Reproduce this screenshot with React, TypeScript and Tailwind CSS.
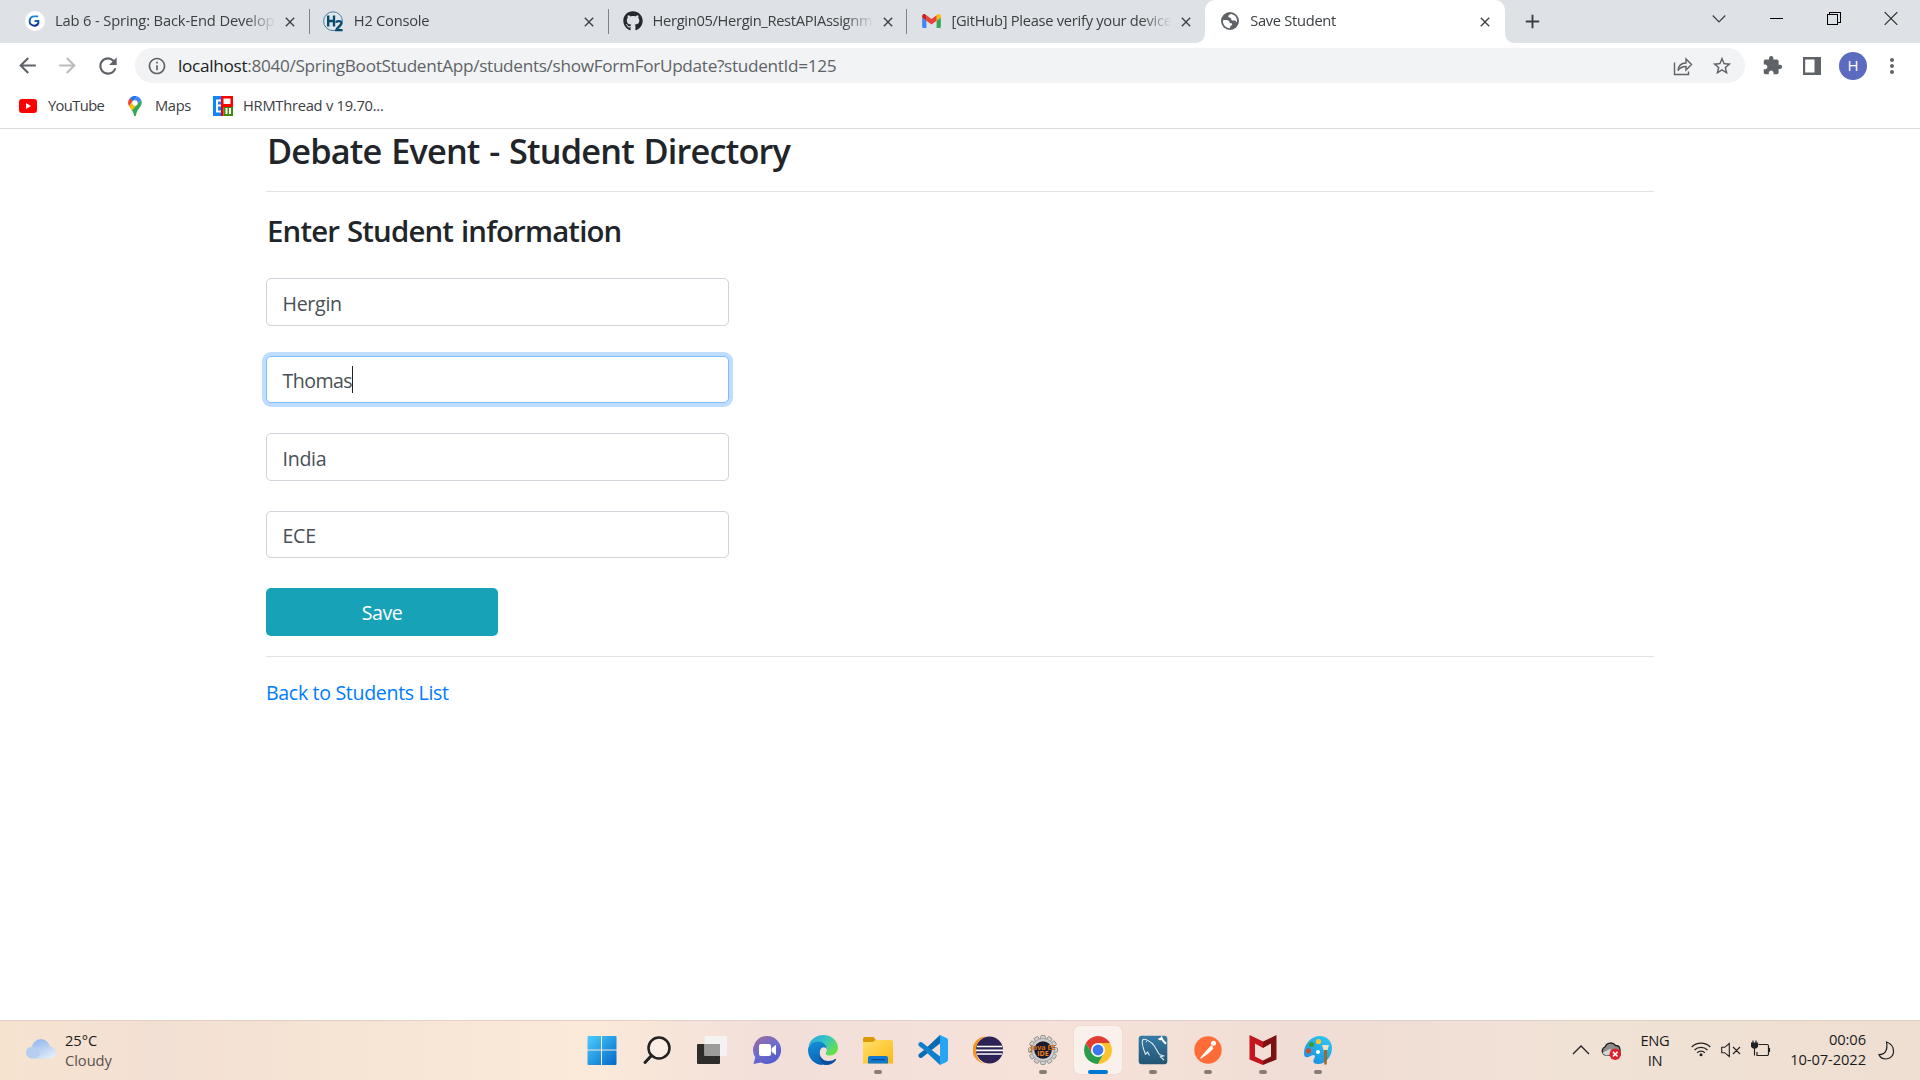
import React from "react";
import { FaGithub } from "react-icons/fa";
import {
  MdClose,
  MdAdd,
  MdArrowBack,
  MdArrowForward,
  MdRefresh,
  MdInfoOutline,
  MdStarBorder,
  MdExtension,
  MdMoreVert,
} from "react-icons/md";

type TabProps = {
  icon: React.ReactNode;
  title: string;
  titleClass: string;
  active?: boolean;
  separator?: boolean;
};

function Flare({ side }: { side: "left" | "right" }) {
  return (
    <svg
      viewBox="0 0 10 10"
      className={
        side === "left"
          ? "absolute bottom-0 -left-[10px] size-[10px]"
          : "absolute -right-[10px] bottom-0 size-[10px] -scale-x-100"
      }
    >
      <path d="M10 0v10H0C6 10 10 6 10 0Z" fill="#fff" />
    </svg>
  );
}

function Tab({ icon, title, titleClass, active, separator }: TabProps) {
  return (
    <div
      className={
        active
          ? "relative flex h-[43px] w-[299.5px] items-center rounded-t-[10px] bg-white"
          : "relative flex h-[43px] w-[298.8px] items-center"
      }
    >
      {active && <Flare side="left" />}
      {active && <Flare side="right" />}
      <span className={separator ? "h-[25px] w-px bg-[#808388]" : "w-px"} />
      <span className="ml-[14px] flex w-5 justify-center pb-px">{icon}</span>
      <span
        className={
          "ml-[10px] w-[221px] overflow-hidden pb-[3px] text-[14.7px] leading-5 whitespace-nowrap text-[#3c4043] [mask-image:linear-gradient(to_right,#000_190px,transparent_221px)] " +
          titleClass
        }
      >
        {title}
      </span>
      <MdClose className="ml-[6px] size-[16px] text-[#3c4043]" />
    </div>
  );
}

function GreatLearningIcon() {
  return (
    <svg viewBox="0 0 20 20" className="size-5">
      <circle cx="10" cy="10" r="10" fill="#fff" />
      <path d="M13.2 5.4H9.4a4.6 4.6 0 1 0 4 6.6v-2H9.6" fill="none" stroke="url(#gl)" strokeWidth="1.9" />
      <defs>
        <linearGradient id="gl" x1="0" y1="0" x2="0" y2="1">
          <stop stopColor="#1d84dc" />
          <stop offset="1" stopColor="#0a2f9b" />
        </linearGradient>
      </defs>
    </svg>
  );
}

function H2Icon() {
  return (
    <svg viewBox="0 0 21 21" className="size-[21px] shrink-0">
      <circle cx="10" cy="10.2" r="9.4" fill="#dfe6ec" stroke="#4d7d99" strokeWidth="1" />
      <path d="M5.2 4.6v10.8M11 4.6v10.8M5.2 10H11" stroke="#0b4a6f" strokeWidth="2.4" fill="none" />
      <path d="M13 11.6c.6-2 5.6-2.2 5.4.6-.2 2.200-4.400 4-5.200 7h6.400" stroke="#0b4a6f" strokeWidth="2.2" fill="none" />
    </svg>
  );
}

function GmailIcon() {
  return (
    <svg viewBox="52 42 88 66" className="h-[14px] w-[19px]">
      <path fill="#4285f4" d="M58 108h14V74L52 59v43c0 3.320 2.690 6 6 6" />
      <path fill="#34a853" d="M120 108h14c3.320 0 6-2.690 6-6V59l-20 15" />
      <path fill="#fbbc04" d="M120 48v26l20-15v-8c0-7.420-8.470-11.650-14.400-7.200" />
      <path fill="#ea4335" d="M72 74V48l24 18 24-18v26L96 92" />
      <path fill="#c5221f" d="M52 51v8l20 15V48l-5.600-4.200c-5.940-4.450-14.400-.220-14.400 7.200" />
    </svg>
  );
}

function GlobeIcon() {
  return (
    <svg viewBox="0 0 18 18" className="size-[18px] shrink-0">
      <circle cx="9" cy="9" r="9" fill="#5f6368" />
      <path d="M9.500 2c-1.500 1-2.500 1.500-2 3 .3 1 1.800.500 2.500 1.200.6.700-.2 1.600.8 2 1.500.5 2.600-.2 3.700.6.8.6.800 1.600 1.500 1.300.4-5-2.500-7.600-6.500-8.100Z" fill="#fff" />
      <path d="M2 8.200c1.500-.2 4.500-.4 5.700.5 1 .8.500 1.900 1.500 2.300 1 .4 2 .1 2 1.300 0 1.300-1.600 1.200-2 2.300-.2.700 0 1.200-.2 1.600C4.500 16 1.500 12.500 2 8.200Z" fill="#fff" />
    </svg>
  );
}

function BrowserChrome() {
  return (
    <header className="flex h-[129px] flex-col border-b border-[#dadce0] bg-white">
      <div className="flex h-[43px] items-center bg-[#dee1e6] pl-[10px]">
        <Tab icon={<GreatLearningIcon />} title="Lab 6 - Spring: Back-End Develop" titleClass="tracking-[-0.14px]" />
        <Tab icon={<H2Icon />} title="H2 Console" titleClass="tracking-[-0.25px]" separator />
        <Tab
          icon={<FaGithub className="size-5 text-[#24292f]" />}
          title="Hergin05/Hergin_RestAPIAssignm"
          titleClass="tracking-[-0.33px]"
          separator
        />
        <Tab icon={<GmailIcon />} title="[GitHub] Please verify your device" titleClass="tracking-[-0.28px]" separator />
        <Tab icon={<GlobeIcon />} title="Save Student" titleClass="tracking-[-0.3px]" active />
        <MdAdd className="ml-[16px] size-[23px] text-[#3c4043]" />
        <div className="ml-auto flex h-full items-start pt-[11px] text-black">
          <svg viewBox="0 0 14 14" className="mr-[44px] size-[14px]" fill="none" stroke="#3c4043">
            <path d="M.7 4.500 7 11l6.300-6.500" strokeWidth="1.2" />
          </svg>
          <svg viewBox="0 0 14 14" className="mr-[43px] size-[14px]" fill="none" stroke="#000" shapeRendering="crispEdges">
            <path d="M0 7.500h13" />
          </svg>
          <svg viewBox="0 0 14 14" className="mr-[43px] size-[14px]" fill="none" stroke="#000" shapeRendering="crispEdges">
            <path d="M.500 3.500h10v10H.5zM2.500 3.500v-2h10.500v10h-2.500" />
          </svg>
          <svg viewBox="0 0 14 14" className="mr-[22px] size-[14px]" fill="none" stroke="#222">
            <path d="M.7 1.200l12.600 12.600M13.300 1.200.7 13.800" strokeWidth="1.100" />
          </svg>
        </div>
      </div>

      <div className="flex h-[45px] items-center text-[#5f6368]">
        <MdArrowBack className="ml-[15px] size-[25px]" />
        <MdArrowForward className="ml-[15px] size-[25px] text-[#babcbe]" />
        <MdRefresh className="ml-[15px] size-[26px]" />
        <div className="ml-[14px] flex h-[35px] w-[1610px] items-center rounded-full bg-[#f1f3f4]">
          <MdInfoOutline className="ml-[12px] size-[20px]" />
          <span className="ml-[11px] text-[17.2px] leading-6 tracking-[-0.31px] whitespace-nowrap">
            <span className="text-[#202124]">localhost</span>
            :8040/SpringBootStudentApp/students/showFormForUpdate?studentId=125
          </span>
          <svg viewBox="0 0 20 20" className="mr-[18px] ml-auto size-5" fill="none" stroke="#5f6368" strokeWidth="1.400">
            <path d="M1.500 6.500v12h14v-3M5 14.500c.500-5 3-7.500 8-7.500V3l5.500 5.500L13 14v-3.500c-4 0-6 1-8 4Z" />
          </svg>
          <MdStarBorder className="mr-[12px] size-[22px]" />
        </div>
        <MdExtension className="ml-[17px] size-[21px]" />
        <svg viewBox="0 0 18 18" className="ml-[20px] size-[18px]">
          <path d="M0 0h18v18H0zM2.200 2.400v13.200h9.300V2.400z" fill="#5f6368" fillRule="evenodd" />
        </svg>
        <span className="ml-[18px] flex size-7 items-center justify-center rounded-full bg-[#5c6bc0] text-[15px] font-medium text-white">
          H
        </span>
        <MdMoreVert className="ml-[13px] size-6" />
      </div>

      <div className="flex h-10 items-center pb-[5px] text-[14.700px] text-[#3c4043]">
        <svg viewBox="0 0 18 14" className="ml-[19px] h-[14px] w-[18px]">
          <rect width="18" height="14" rx="3" fill="#f00" />
          <path d="M7 4v6l5-3z" fill="#fff" />
        </svg>
        <span className="ml-[11px] w-[57px] pb-px tracking-[-0.600px]">YouTube</span>
        <svg viewBox="0 0 14 20" className="ml-[23px] h-5 w-[14px]">
          <path d="M0 7a7 7 0 0 1 2-5l3 2.500-3.700 5.700A7 7 0 0 1 0 7Z" fill="#ea4335" />
          <path d="M2 2a7 7 0 0 1 7-1.700L5 5z" fill="#1a73e8" />
          <path d="M9 .3A7 7 0 0 1 13.200 4L9.200 8.500 5 5z" fill="#4285f4" />
          <path d="M1.200 10.300 5 5l4 4-5.200 5.500z" fill="#fbbc04" />
          <path d="M13.200 4c2.500 6-4.200 8.500-5 14.500-.3 2-2.100 2-2.400 0-.2-1.500-1-3-2-4z" fill="#34a853" />
          <circle cx="7" cy="7" r="2.700" fill="#fff" />
        </svg>
        <span className="ml-[13px] w-[36px] pb-px tracking-[-0.350px]">Maps</span>
        <svg viewBox="0 0 20 20" className="ml-[22px] size-5">
          <path d="M0 0h8v20H0z" fill="#0a84ff" />
          <path d="M3 3.500h5v2H5v3h3v2H5v4h3v2H3z" fill="#fff" />
          <path d="M8 0h12v11H8z" fill="#f00" />
          <path d="M10.500 2.500h7V8h-7z" fill="#fff" />
          <path d="M10.500 11H20v9h-9.500z" fill="#3a8a0c" />
          <path d="M12.500 12h2v6h-2zM16 12h2v6h-2z" fill="#fff" />
          <path d="M8 10h2.500v10H8z" fill="#e00" />
        </svg>
        <span className="ml-[10px] pb-px tracking-[-0.250px]">HRMThread v 19.70...</span>
      </div>
    </header>
  );
}

function Field({ value, focused }: { value: string; focused?: boolean }) {
  return (
    <div
      className={
        focused
          ? "mb-[30px] flex h-[47.500px] w-[463px] items-center rounded-[5px] border border-[#80bdff] bg-white px-[15.500px] shadow-[0_0_0_4px_#bfdeff]"
          : "mb-[30px] flex h-[47.500px] w-[463px] items-center rounded-[5px] border border-[#ced4da] bg-white px-[15.500px]"
      }
    >
      <span
        className={
          focused
            ? "pt-[3px] text-[19.600px] leading-7 tracking-[-0.550px] text-[#495057]"
            : "pt-[4px] text-[19.600px] leading-7 tracking-[-0.300px] text-[#495057]"
        }
      >
        {value}
      </span>
      {focused && <span className="h-[27px] w-px bg-[#222]" />}
    </div>
  );
}

function StudentForm() {
  return (
    <main className="h-[891px] bg-white px-[266px] text-[#212529]">
      <h1 className="h-[63px] border-b border-[#e3e3e3] pl-px text-[34.300px] leading-[44px] font-[560] tracking-[-0.820px] [word-spacing:1.5px]">
        Debate Event - Student Directory
      </h1>
      <h2 className="mt-[19px] mb-[26px] h-[41px] pl-px text-[29.400px] leading-[41px] font-[560] tracking-[-0.830px] [word-spacing:1px]">
        Enter Student information
      </h2>
      <Field value="Hergin" />
      <Field value="Thomas" focused />
      <Field value="India" />
      <Field value="ECE" />
      <button className="block h-[48px] w-[232px] rounded-[5px] bg-[#17a2b8] pt-[2px] text-[19.600px] tracking-[-0.500px] text-white">
        Save
      </button>
      <div className="mt-[20px] border-t border-[#e3e3e3] pt-[21px] text-[19.600px] leading-[30px] tracking-[-0.340px] text-[#007bff]">
        Back to Students List
      </div>
    </main>
  );
}

function Slot({ children, running, active }: { children: React.ReactNode; running?: boolean; active?: boolean }) {
  return (
    <div className="flex w-[55.100px] justify-center">
      <div
        className={
          active
            ? "flex h-12 w-12 flex-col items-center rounded-[5px] bg-[#faf1ec] pt-[9px] shadow-[0_0_1px_#c9b5aa]"
            : "flex h-12 w-12 flex-col items-center pt-[9px]"
        }
      >
        <svg viewBox="0 0 30 30" className="size-[30px]">
          {children}
        </svg>
        {running && <span className="mt-[5px] h-1 w-2 rounded-full bg-[#877c76]" />}
        {active && <span className="mt-[5px] h-1 w-5 rounded-full bg-[#0078d4]" />}
      </div>
    </div>
  );
}

const gearTeeth = Array.from({ length: 12 }, (_, i) => i * 30);

function Taskbar() {
  return (
    <footer className="flex h-[60px] border-t border-[#dfcfc6] bg-[linear-gradient(90deg,#f6e3cf_0%,#f3e0d4_8%,#f6e4d4_18%,#fbe9d9_31%,#f2dfda_40%,#f6e2d8_55%,#f0ddd5_68%,#f1e2d6_82%,#efdfd3_100%)] text-[#1b1b1b]">
      <div className="flex w-[574.600px] pt-[5px]">
        <svg viewBox="0 0 30 20" className="mt-[13px] ml-[26px] h-5 w-[30px]">
          <defs>
            <linearGradient id="cl" x1="0" y1="0" x2=".3" y2="1">
              <stop stopColor="#8fb4ec" />
              <stop offset="1" stopColor="#cfe0f7" />
            </linearGradient>
            <linearGradient id="cl2" x1="0" y1="0" x2="1" y2="1">
              <stop stopColor="#a3c2ee" />
              <stop offset="1" stopColor="#eef4fb" />
            </linearGradient>
          </defs>
          <circle cx="15" cy="9" r="9" fill="url(#cl)" />
          <path d="M6 7.500c3-.5 5 1 6.500 3.500l3 8.500H6a6 6 0 0 1 0-12Z" fill="#b4cdf0" />
          <path d="M8 19.500c4-.5 7-5 9.500-9 3-5.500 12.500-3 12.500 3.200 0 3.300-2.600 5.800-6 5.800z" fill="url(#cl2)" />
        </svg>
        <div className="mt-[4px] ml-[9px] text-[14.700px] leading-5 tracking-[-0.050px]">
          <div>25°C</div>
          <div className="text-[#5a534f]">Cloudy</div>
        </div>
      </div>

      <div className="flex pt-[5px]">
        <Slot>
          <defs>
            <linearGradient id="win" x1="0" y1="0" x2="30" y2="30" gradientUnits="userSpaceOnUse">
              <stop stopColor="#4fd0ff" />
              <stop offset="1" stopColor="#0067c8" />
            </linearGradient>
          </defs>
          <path d="M.500 2a1 1 0 0 1 1-1H14v13.500H.5zM15 1h13.500a1 1 0 0 1 1 1v12.500H15zM.5 15.500H14V30H1.500a1 1 0 0 1-1-1zM15 15.500h14.500V29a1 1 0 0 1-1 1H15z" fill="url(#win)" />
        </Slot>
        <Slot>
          <circle cx="17" cy="13" r="10.500" fill="#fff" fillOpacity=".3" stroke="#222" strokeWidth="2.500" />
          <path d="m9.500 20.500-6.500 7" stroke="#222" strokeWidth="3" strokeLinecap="round" />
        </Slot>
        <Slot>
          <rect y="9" width="23" height="20" rx="1" fill="#2e2d2c" />
          <rect x="7.500" y="1" width="22.500" height="20" rx="1" fill="#f4f4f4" fillOpacity=".9" />
          <path d="M7.500 9H23v12H7.500z" fill="#9e9c9b" />
        </Slot>
        <Slot>
          <defs>
            <linearGradient id="chat" x1=".2" y1="0" x2=".8" y2="1">
              <stop stopColor="#9a6a9f" />
              <stop offset=".5" stopColor="#6a6cd0" />
              <stop offset="1" stopColor="#5059c9" />
            </linearGradient>
          </defs>
          <path d="M15 1a14 14 0 1 1-6 26.600L1.500 29l1.700-6.700A14 14 0 0 1 15 1Z" fill="url(#chat)" />
          <rect x="7" y="9" width="12" height="12" rx="2" fill="#fff" />
          <path d="m20 13.500 3.500-3v9l-3.500-3z" fill="#fff" stroke="#fff" strokeLinejoin="round" />
        </Slot>
        <Slot>
          <defs>
            <linearGradient id="ea" x1="0" y1="0" x2="1" y2=".6">
              <stop stopColor="#2a9fe0" />
              <stop offset=".5" stopColor="#35c3c9" />
              <stop offset="1" stopColor="#66e04a" />
            </linearGradient>
            <linearGradient id="eb" x1="0" y1="0" x2=".3" y2="1">
              <stop stopColor="#1593d8" />
              <stop offset="1" stopColor="#0a63b8" />
            </linearGradient>
          </defs>
          <path d="M.5 11C2.500 4 8.500 0 15.200 0 24 0 30 6.500 30 12.500c0 5-3.800 8-8 8-3.500 0-5-1.500-4-2.800 1.400-2 1.300-4.700-.5-6.700C13 6 5 6.500.5 11Z" fill="url(#ea)" />
          <path d="M12.500 12.500c-3 5.500.5 14 8 13.600 3 0 5-1 6.500-2 1-.5 1.500.2 1 1C25.500 29 21 30.400 17 30 11 29.500 8 24 8.500 19z" fill="#0c4f9e" />
          <path d="M15 30C6 30 0 23 0 15c0-5 5-8.500 10-8.500 5.500 0 9 4.500 9 8-1.500-3-5-2.700-6.500 0-3 6 1.500 13.500 2.500 15.500Z" fill="url(#eb)" />
        </Slot>
        <Slot running>
          <defs>
            <linearGradient id="fo" x1="0" y1="0" x2="1" y2="1">
              <stop stopColor="#ffe06a" />
              <stop offset="1" stopColor="#fbb917" />
            </linearGradient>
          </defs>
          <path d="M0 4a2 2 0 0 1 2-2h8.500l2.500 3v5H0z" fill="#d99a06" />
          <path d="M0 7h10l2.500-2H28a2 2 0 0 1 2 2v21.500H0z" fill="url(#fo)" />
          <path d="M5 28.500V23a2 2 0 0 1 2-2h16a2 2 0 0 1 2 2v5.500z" fill="#0f78cf" />
          <path d="M9 24.700h12" stroke="#0a4a8a" strokeWidth="1.200" strokeLinecap="round" />
        </Slot>
        <Slot>
          <path d="M22 0 5.500 15.500 1.500 18.600C.3 19.500 0 21 .8 22l1 .8c.8.500 1.700.400 2.400-.2L22 8.500z" fill="#0a6ab4" />
          <path d="M22 30 5.500 14.500l-4-3.100C.3 10.500 0 9 .8 8l1-.8c.8-.5 1.700-.4 2.400.2L22 21.500z" fill="#1080cc" />
          <path d="M22 0 28.500 3A2.500 2.500 0 0 1 30 5.200v19.600a2.500 2.500 0 0 1-1.500 2.200L22 30z" fill="#27a4f2" />
        </Slot>
        <Slot>
          <path d="M13 1.500a13.500 13.500 0 0 0 0 27C0 27 -1 6 13 1.500Z" fill="#f7941e" />
          <circle cx="16.500" cy="15" r="13.500" fill="#2c2255" />
          <path d="M4 11.500h25M3 15.300h27M4 19h25" stroke="#fff" strokeWidth="1.700" />
        </Slot>
        <Slot running>
          {gearTeeth.map((a) => (
            <rect key={a} x="12.700" y=".5" width="4.600" height="6" rx="1" fill="#d2d2d2" stroke="#777" strokeWidth=".7" transform={`rotate(${a} 15 15)`} />
          ))}
          <circle cx="15" cy="15" r="11.500" fill="#cecece" stroke="#8a8a8a" strokeWidth=".6" />
          <circle cx="15" cy="15" r="8.800" fill="#1c1a2c" />
          <text x="15" y="14.500" textAnchor="middle" fontSize="7.500" fontWeight="700" fill="#f58220" stroke="#3a1c08" strokeWidth=".2" textLength="25" lengthAdjust="spacingAndGlyphs">Java EE</text>
          <text x="15" y="21" textAnchor="middle" fontSize="7" fontWeight="700" fill="#f58220">IDE</text>
        </Slot>
        <Slot active>
          <path d="M15 29 21 18.500 15 15 9 18.500 2.900 8A14 14 0 0 0 15 29Z" fill="#2a9d4b" />
          <path d="M27.100 8H15l6 10.500L15 29A14 14 0 0 0 27.100 8Z" fill="#fcc42a" />
          <path d="M2.900 8 9 18.500 15 8h12.100A14 14 0 0 0 2.900 8Z" fill="#e33b2e" />
          <circle cx="15" cy="15" r="7" fill="#fff" />
          <circle cx="15" cy="15" r="5.400" fill="#3b78ee" />
        </Slot>
        <Slot running>
          <defs>
            <linearGradient id="my" x1="0" y1="0" x2="0" y2="1">
              <stop stopColor="#367ba6" />
              <stop offset="1" stopColor="#235573" />
            </linearGradient>
          </defs>
          <rect x=".7" y=".7" width="28.600" height="28.600" rx="3" fill="url(#my)" />
          <path d="M7.500 19.500C5 13 3.500 6 5 4.500c2-1 8 2 11 6 2 3 3.500 6.500 5.500 9l4 1.500-3 .8 3.500 3.200M7.500 19.500l2-2.500 2 3.500M8 6.500l.8.500" fill="none" stroke="#e4eef4" strokeWidth="1.100" />
          <path d="m20.500 4 2 .2 1-1.500 1.500 3 3 3" fill="none" stroke="#fff" strokeWidth="2" />
        </Slot>
        <Slot running>
          <circle cx="15" cy="15" r="13.700" fill="#ff6c37" />
          <circle cx="20.500" cy="8.200" r="2.500" fill="#fff" />
          <path d="m18.500 11-5 5.500-5.500 6.500 7-5 4.500-4.500z" fill="#fff" stroke="#fff" strokeWidth="1.300" strokeLinejoin="round" />
        </Slot>
        <Slot running>
          <path d="M1.500 0 15 6.500V13L7 8.500v13l8 4V30L1.500 24.500z" fill="#c4161c" />
          <path d="M28.500 0 15 6.500V13l8-4.500v13l-8 4V30l13.500-5.500z" fill="#7c1211" />
        </Slot>
        <Slot running>
          <defs>
            <linearGradient id="pa" x1=".8" y1="0" x2=".2" y2="1">
              <stop stopColor="#2cc7f2" />
              <stop offset="1" stopColor="#1b8de0" />
            </linearGradient>
          </defs>
          <path d="M17 1c7 0 12 5 12 12 0 8-6 16-14 16-5 0-5.500-3-3.500-6 1.500-3-1-4-4-2-4 2.500-6.500 1.500-6.500-3C1 9 8 1 17 1Z" fill="url(#pa)" />
          <circle cx="8.500" cy="9.500" r="2.600" fill="#3d9b35" />
          <circle cx="15.500" cy="6.500" r="2.600" fill="#fdc32c" />
          <circle cx="5.500" cy="15.800" r="2.600" fill="#c8502c" />
          <circle cx="15" cy="17" r="2" fill="#fff" />
          <path d="M19 10h7l-1.500 5h-4z" fill="#f2e0c4" />
          <path d="M21 15h3l-.3 14.500h-2.400z" fill="#a8671f" />
        </Slot>
      </div>

      <div className="ml-auto flex items-start">
        <svg viewBox="0 0 18 12" className="mt-[23px] mr-[10px] h-3 w-[18px]" fill="none" stroke="#222" strokeWidth="1.300">
          <path d="m1 10 8-8 8 8" />
        </svg>
        <svg viewBox="0 0 21 19" className="mt-[20px] mr-[18px] h-[19px] w-[21px]">
          <path d="M5 14a4.300 4.300 0 0 1 0-8 6 6 0 0 1 10.500-1.500c3 0 4.500 2 4.500 4.500v5z" fill="#8f8e8d" stroke="#222" strokeWidth="1.300" />
          <path d="m2 12 8-4 6 5-10 1.500z" fill="#d9d7d6" />
          <circle cx="15.200" cy="13.200" r="5.700" fill="#df2030" />
          <path d="m12.900 10.900 4.600 4.600m0-4.600-4.600 4.600" stroke="#fff" strokeWidth="1.500" />
        </svg>
        <div className="mt-[9px] mr-[20px] w-[32px] text-center text-[14.700px] leading-5 tracking-[-0.300px]">
          <div>ENG</div>
          <div>IN</div>
        </div>
        <svg viewBox="0 0 20 16" className="mt-[20px] mr-[10px] h-4 w-5" fill="none" stroke="#222" strokeWidth="1.300">
          <path d="M.7 6a13.200 13.200 0 0 1 18.600 0M3.500 9a9.300 9.300 0 0 1 13 0M6.200 11.700a5.500 5.500 0 0 1 7.600 0" />
          <circle cx="10" cy="13.700" r="1.500" fill="#222" stroke="none" />
        </svg>
        <svg viewBox="0 0 20 16" className="mt-[21px] mr-[10px] h-4 w-5" fill="none" stroke="#222" strokeWidth="1.100">
          <path d="M.7 5.300h3L8.300 1.500v13L3.700 10.700h-3zM12 5l7 7M19 5l-7 7" />
        </svg>
        <svg viewBox="0 0 20 18" className="mt-[19px] mr-[18px] h-[18px] w-5" fill="none" stroke="#222" strokeWidth="1.200">
          <path d="M7.500 4.500H16a1.500 1.500 0 0 1 1.500 1.500v8a1.500 1.500 0 0 1-1.500 1.500H6V12M18.500 8v4" />
          <path d="M3.500 7v8.500" />
          <path d="M.5 3h6v3.500l-1.500 1.500H2L.5 6.500zM2 .5V3M5 .5V3" fill="#222" />
        </svg>
        <div className="mt-[8px] w-[77px] text-right text-[14.700px] leading-5 tracking-[-0.080px] whitespace-nowrap">
          <div>00:06</div>
          <div>10-07-2022</div>
        </div>
        <svg viewBox="0 0 17 19" className="mt-[20px] mr-[25px] ml-[12px] h-[19px] w-[17px]" fill="none" stroke="#222" strokeWidth="1.200">
          <path d="M8.500 1c10 3.500 9 16.500-.5 17-3 0-6-1.500-7-4.500C7 14 10 9 8.500 1Z" />
        </svg>
      </div>
    </footer>
  );
}

export default function App() {
  return (
    <div className="h-[1080px] w-[1920px] overflow-hidden bg-white font-['Open_Sans',sans-serif]">
      <BrowserChrome />
      <StudentForm />
      <Taskbar />
    </div>
  );
}
